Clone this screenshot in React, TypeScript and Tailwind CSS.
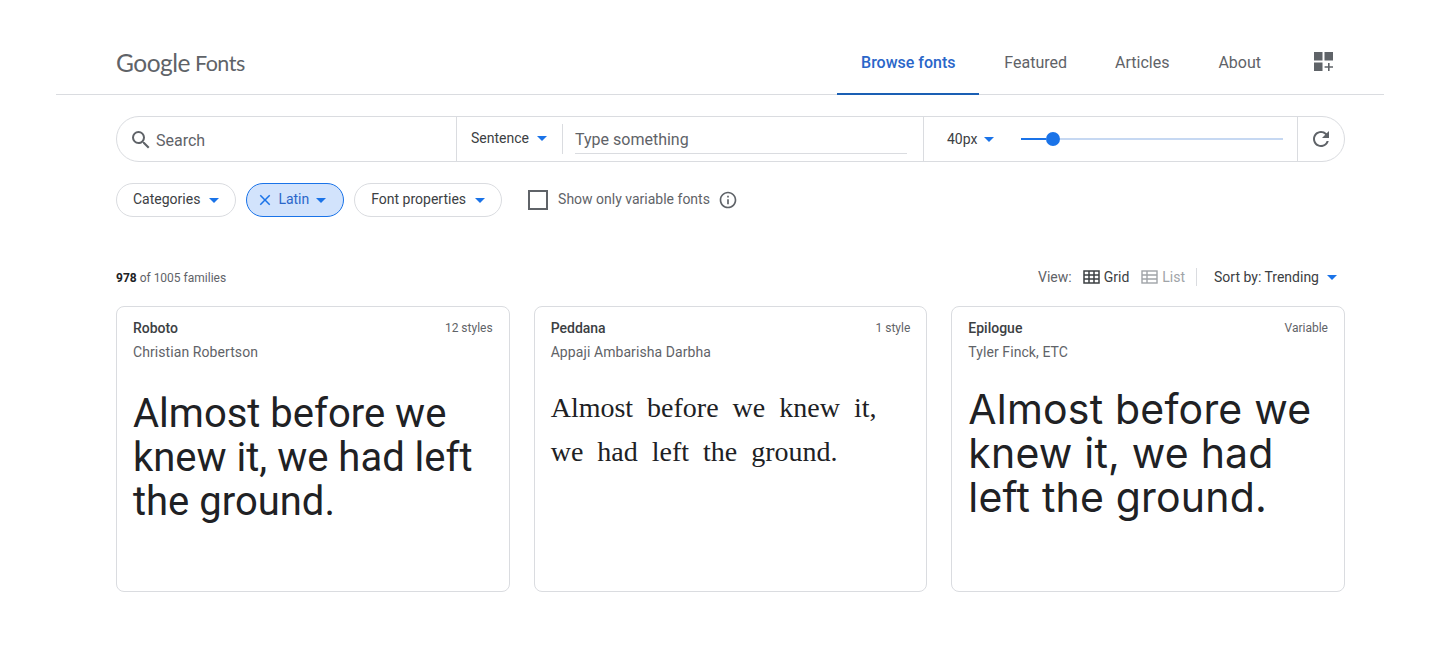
import { MdSearch, MdClose, MdRefresh, MdInfoOutline } from 'react-icons/md';

const cards = [
  {
    name: 'Roboto',
    styles: '12 styles',
    author: 'Christian Robertson',
    text: 'Almost before we knew it, we had left the ground.',
    textClass: "mt-[32px] text-[40px] leading-[44px] font-normal font-['Roboto',sans-serif] text-[#202124]",
  },
  {
    name: 'Peddana',
    styles: '1 style',
    author: 'Appaji Ambarisha Darbha',
    text: 'Almost before we knew it, we had left the ground.',
    textClass: "mt-[26px] text-[28px] leading-[44px] [word-spacing:7px] font-['Liberation_Serif',serif] text-[#202124]",
  },
  {
    name: 'Epilogue',
    styles: 'Variable',
    author: 'Tyler Finck, ETC',
    text: 'Almost before we knew it, we had left the ground.',
    textClass: "mt-[27px] text-[41px] leading-[44px] tracking-[0.2px] font-normal font-['Inter',sans-serif] text-[#202124]",
  },
];

function Caret({ className = '' }: { className?: string }) {
  return <span className={`inline-block w-0 h-0 border-l-[5px] border-r-[5px] border-t-[5px] border-l-transparent border-r-transparent border-t-[#1a73e8] ${className}`} />;
}

function Chip({ label }: { label: string }) {
  return (
    <div className="h-[34px] flex items-center gap-[9px] px-4 rounded-full border border-[#dadce0] text-sm text-[#3c4043]">
      <span className="pb-[2px]">{label}</span>
      <Caret />
    </div>
  );
}

export default function App() {
  return (
    <div className="bg-white min-h-[656px] px-14 font-['Roboto',sans-serif]">
      <header className="h-[95px] border-b border-[#dadce0] pl-[60px] pr-[50px] flex items-end justify-between">
        <div className="h-[62px] flex items-center gap-[5px] text-[#5f6368] font-['Lato',sans-serif] tracking-[-0.5px]">
          <span className="font-normal text-[24.5px]">Google</span>
          <span className="font-normal text-[21.5px]">Fonts</span>
        </div>
        <nav className="flex items-center h-[62px] text-base text-[#5f6368]">
          <a className="h-full w-[142px] flex items-center justify-center border-b-2 border-[#1a5fb4] text-[#2a66c9] font-medium mb-[-1px]">Browse fonts</a>
          <a className="ml-[25px]">Featured</a>
          <a className="ml-12">Articles</a>
          <a className="ml-[49px]">About</a>
          <svg className="ml-[53px] mb-[2px]" width="20" height="20" viewBox="0 0 20 20" fill="#5f6368">
            <rect x="0" y="0" width="8.5" height="8.5" />
            <rect x="10.5" y="0" width="8.5" height="8.5" />
            <rect x="0" y="10.5" width="8.5" height="8.5" />
            <path d="M14 11h1.6v3.2H19v1.6h-3.4V19H14v-3.2h-3.4v-1.6H14z" />
          </svg>
        </nav>
      </header>

      <div className="pl-[60px] pr-[39px]">
        <div className="mt-[21px] h-[46px] flex items-stretch rounded-full border border-[#dadce0] text-[#5f6368]">
          <div className="w-[340px] flex items-center pl-[12px] gap-[3px] border-r border-[#dadce0]">
            <MdSearch size={24} className="text-[#5f6368] mt-[2px]" />
            <span className="text-base pt-[3px]">Search</span>
          </div>
          <div className="w-[105px] flex items-center pl-[14px] gap-2 text-sm text-[#3c4043] pb-[2px]">
            Sentence
            <Caret />
          </div>
          <div className="w-[362px] pr-4 border-r border-[#dadce0] flex">
            <div className="flex-1 flex items-stretch my-[7px]">
              <div className="flex-1 pl-3 border-l border-[#dadce0] flex">
                <div className="flex-1 border-b border-[#dadce0] text-base text-[#5f6368] flex items-center pt-[3px]">Type something</div>
              </div>
            </div>
          </div>
          <div className="w-[374px] flex items-center pl-[23px] border-r border-[#dadce0]">
            <span className="text-sm text-[#3c4043]">40px</span>
            <Caret className="ml-[7px]" />
            <div className="ml-[27px] w-[262px] flex items-center">
              <div className="w-[25px] h-0.5 bg-[#1a73e8]" />
              <div className="w-[14px] h-[14px] rounded-full bg-[#1a73e8]" />
              <div className="flex-1 h-0.5 bg-[#c6d8f2]" />
            </div>
          </div>
          <div className="flex-1 flex items-center justify-center">
            <MdRefresh size={24} className="text-[#5f6368]" />
          </div>
        </div>

        <div className="mt-[21px] flex items-center">
          <Chip label="Categories" />
          <div className="ml-[10px] h-[34px] flex items-center pl-[9px] pr-[17px] rounded-full border border-[#1a73e8] bg-[#d2e3fc] text-sm text-[#2a66c9]">
            <MdClose size={18} className="text-[#1a73e8]" />
            <span className="ml-[4px] pb-[2px]">Latin</span>
            <Caret className="ml-[7px]" />
          </div>
          <div className="ml-[10px]"><Chip label="Font properties" /></div>
          <div className="ml-[26px] w-5 h-5 border-2 border-[#5f6368]" />
          <span className="ml-[10px] text-sm text-[#5f6368] pb-[2px]">Show only variable fonts</span>
          <MdInfoOutline size={20} className="ml-[8px] text-[#5f6368]" />
        </div>

        <div className="mt-[50px] h-5 flex items-center justify-between">
          <div className="text-xs text-[#5f6368] pt-[2px]"><b className="text-[#202124] font-bold">978</b> of 1005 families</div>
          <div className="flex items-center text-sm text-[#5f6368] pr-2">
            <span>View:</span>
            <svg className="ml-[11px]" width="17" height="14" viewBox="0 0 17 14" fill="none" stroke="#3c4043" strokeWidth="1.5">
              <rect x="1" y="1" width="15" height="12" />
              <path d="M1 5h15M1 9h15M6 1v12M11 1v12" />
            </svg>
            <span className="ml-1 text-[#3c4043]">Grid</span>
            <svg className="ml-3" width="17" height="14" viewBox="0 0 17 14" fill="none" stroke="#a0a4a8" strokeWidth="1.4">
              <rect x="1" y="1" width="15" height="12" />
              <path d="M1 5h15M1 9h15M6 1v12" />
            </svg>
            <span className="ml-1 text-[#a0a4a8]">List</span>
            <div className="ml-[11px] w-px h-[18px] bg-[#dadce0]" />
            <span className="ml-[17px] text-[#3c4043]">Sort by: Trending</span>
            <Caret className="ml-[8px]" />
          </div>
        </div>

        <div className="mt-[19px] grid grid-cols-3 gap-6">
          {cards.map(card => (
            <div key={card.name} className="h-[286px] rounded-lg border border-[#dadce0] pt-[13px] px-4 overflow-hidden">
              <div className="flex items-center justify-between">
                <span className="text-sm font-medium text-[#3c4043] leading-[16px]">{card.name}</span>
                <span className="text-xs text-[#5f6368]">{card.styles}</span>
              </div>
              <div className="mt-2 text-sm text-[#5f6368] leading-4 tracking-[0.08px]">{card.author}</div>
              <p className={card.textClass}>{card.text}</p>
            </div>
          ))}
        </div>
      </div>
    </div>
  );
}
